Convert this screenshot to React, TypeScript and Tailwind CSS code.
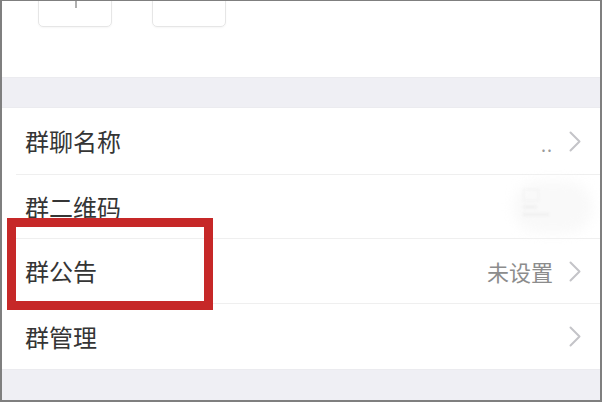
const font = { fontFamily: '"Noto Sans CJK SC", "Noto Sans", sans-serif' };

function Chevron({ light }: { light?: boolean }) {
  return (
    <svg width="12" height="21" viewBox="0 0 12 21" className="shrink-0">
      <path
        d="M1.5 1.5 L10.5 10.5 L1.5 19.5"
        fill="none"
        stroke={light ? "#ececec" : "#c4c4c8"}
        strokeWidth="2"
        strokeLinecap="round"
        strokeLinejoin="round"
      />
    </svg>
  );
}

type Row = { label: string; value?: string; kind?: "dots" | "qr"; h: string };

const rows: Row[] = [
  { label: "群聊名称", kind: "dots", h: "h-[66px]" },
  { label: "群二维码", kind: "qr", h: "h-[63px]" },
  { label: "群公告", value: "未设置", h: "h-[64px]" },
  { label: "群管理", h: "h-[65px]" },
];

export default function App() {
  return (
    <div
      className="w-[602px] h-[402px] overflow-hidden border-t border-l-2 border-r-2 border-b-2 border-[#7f7f7f] bg-white"
      style={font}
    >
      <div className="relative flex h-full flex-col">
        {/* member avatars, cut off at the top */}
        <div className="flex h-[76px] gap-[40px] overflow-hidden pl-[36px]">
          <div className="relative -mt-[48px] h-[74px] w-[74px] shrink-0 rounded-[5px] border border-[#e6e6e6] shadow-[0_1px_2px_rgba(0,0,0,0.04)]">
            <div className="absolute left-[36px] top-[46px] h-[8px] w-[2px] bg-[#b0b0b0]" />
          </div>
          <div className="-mt-[48px] h-[74px] w-[74px] shrink-0 rounded-[5px] border border-[#e6e6e6] shadow-[0_1px_2px_rgba(0,0,0,0.04)]" />
        </div>

        <div className="h-[31px] border-y border-[#ebebef] bg-[#efeff4]" />

        <div className="flex flex-col bg-white">
          {rows.map((r, i) => (
            <div key={r.label} className="flex flex-col">
              <div className={`flex ${r.h} items-center pl-[23px] pr-[19px]`}>
                <span className="flex-1 text-[24px] leading-none text-[#353535]">{r.label}</span>
                {r.kind === "dots" && (
                  <span className="mr-[16px] mt-[6px] text-[18px] leading-none tracking-[1px] text-[#9a9a9a]">..</span>
                )}
                {r.kind === "qr" && (
                  <div className="relative mr-[4px] flex items-center">
                    <div className="absolute -left-[52px] -top-[26px] h-[52px] w-[80px] rounded-full bg-[#f9f9f9] blur-[6px]" />
                    <div className="absolute -left-[42px] -top-[18px] flex h-[34px] w-[30px] flex-col gap-[4px] opacity-40 blur-[1.5px]">
                      <div className="h-[12px] w-[16px] border border-[#e0e0e0]" />
                      <div className="h-[4px] w-[14px] bg-[#e6e6e6]" />
                      <div className="h-[3px] w-[26px] bg-[#e0e0e0]" />
                    </div>
                  </div>
                )}
                {r.value && (
                  <span className="mr-[16px] text-[22px] leading-none text-[#8c8c8c]">{r.value}</span>
                )}
                <Chevron light={r.kind === "qr"} />
              </div>
              {i < rows.length - 1 && <div className="ml-[14px] h-px bg-[#efefef]" />}
            </div>
          ))}
        </div>

        <div className="flex-1 border-t border-[#ebebef] bg-[#efeff4]" />

        {/* red highlight */}
        <div className="absolute left-[5px] top-[217px] h-[92px] w-[206px] border-[9px] border-[#c62828]" />
      </div>
    </div>
  );
}
